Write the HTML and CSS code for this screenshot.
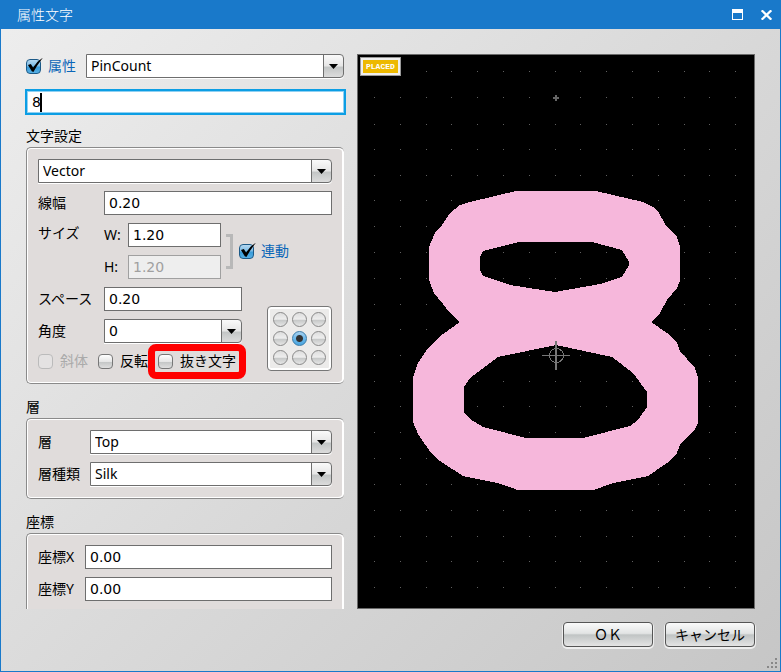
FILE: index.html
```html
<!DOCTYPE html>
<html lang="ja">
<head>
<meta charset="utf-8">
<title>属性文字</title>
<link rel="stylesheet" href="styles.css">
</head>
<body>
<div class="window">
  <header class="titlebar">
    <h1>属性文字</h1>
    <button type="button" class="winbtn" aria-label="最大化"><svg width="11" height="11" viewBox="0 0 11 11" shape-rendering="crispEdges"><path fill="#fff" fill-rule="evenodd" d="M0 0h11v11H0zM1 4v6h9V4z"/></svg></button>
    <button type="button" class="winbtn" aria-label="閉じる"><svg width="11" height="10" viewBox="0 0 11 10"><path stroke="#fff" stroke-width="2.2" d="M.7.3l9.6 9.4M10.3.3L.7 9.7"/></svg></button>
  </header>

  <main class="content">
    <form class="settings">
      <div class="attr-row">
        <label class="check blue"><input type="checkbox" checked>属性</label>
        <span class="select"><select aria-label="属性名"><option>PinCount</option></select></span>
      </div>
      <div class="value-field">
        <input type="text" class="num" value="8" aria-label="属性値">
        <span class="caret"></span>
      </div>

      <section>
        <h2>文字設定</h2>
        <div class="group">
          <span class="select"><select aria-label="フォント"><option>Vector</option></select></span>
          <div class="row">
            <label class="name" for="line">線幅</label>
            <input type="text" class="num" id="line" value="0.20">
          </div>
          <div class="row">
            <span class="name top">サイズ</span>
            <div class="sizes">
              <div class="row"><label class="axis" for="w">W:</label><input type="text" class="num" id="w" value="1.20"></div>
              <div class="row"><label class="axis" for="h">H:</label><input type="text" class="num" id="h" value="1.20" disabled></div>
            </div>
            <span class="bracket"></span>
            <label class="check blue"><input type="checkbox" checked>連動</label>
          </div>
          <div class="lower">
            <div class="lower-fields">
              <div class="row"><label class="name" for="space">スペース</label><input type="text" class="num" id="space" value="0.20"></div>
              <div class="row"><label class="name" for="angle">角度</label><span class="select"><select class="num" id="angle"><option>0</option></select></span></div>
              <div class="checks">
                <label class="check off"><input type="checkbox" disabled>斜体</label>
                <label class="check"><input type="checkbox">反転</label>
                <label class="check marked"><input type="checkbox">抜き文字</label>
              </div>
            </div>
            <div class="pivot" role="radiogroup" aria-label="基準点">
              <input type="radio" name="p" aria-label="左上"><input type="radio" name="p" aria-label="上"><input type="radio" name="p" aria-label="右上">
              <input type="radio" name="p" aria-label="左"><input type="radio" name="p" aria-label="中央" checked><input type="radio" name="p" aria-label="右">
              <input type="radio" name="p" aria-label="左下"><input type="radio" name="p" aria-label="下"><input type="radio" name="p" aria-label="右下">
            </div>
          </div>
        </div>
      </section>

      <section>
        <h2>層</h2>
        <div class="group layer">
          <div class="row"><label class="name" for="layer">層</label><span class="select"><select id="layer"><option>Top</option></select></span></div>
          <div class="row"><label class="name" for="kind">層種類</label><span class="select"><select id="kind"><option>Silk</option></select></span></div>
        </div>
      </section>

      <section>
        <h2>座標</h2>
        <div class="group coord">
          <div class="row"><label class="name" for="cx">座標X</label><input type="text" class="num" id="cx" value="0.00"></div>
          <div class="row"><label class="name" for="cy">座標Y</label><input type="text" class="num" id="cy" value="0.00"></div>
        </div>
      </section>
    </form>

    <div class="preview">
      <svg viewBox="358 55 396 553" preserveAspectRatio="xMidYMid slice" shape-rendering="crispEdges">
        <path fill="none" stroke="#606060" stroke-width="1" stroke-dasharray="1 24.8" d="M374 71.5h380M374 97.5h380M374 124.5h380M374 149.5h380M374 175.5h380M374 200.5h380M374 226.5h380M374 252.5h380M374 278.5h380M374 304.5h380M374 329.5h380M374 355.5h380M374 381.5h380M374 406.5h380M374 432.5h380M374 458.5h380M374 484.5h380M374 510.5h380M374 536.5h380M374 561.5h380M374 587.5h380"/>
        <path fill="#f6b7db" fill-rule="evenodd" d="M516 191H596L643 202 653 207 659 213 665 224 677 237 680 247V281L677 288 667 300 660 313 651 322 667 333 677 343 680 351 695 368 698 377V423L695 429 680 445 676 455 667 463 648 476 613 483 594 490H518L497 483 463 476 440 461 431 453 418 434 413 422V377L418 363 428 348 443 334 460 322 450 313 443 304 434 293 429 280V247L435 233 442 225 450 213 460 205 470 202Z
          M519 242H592L622 250 629 262V265L622 277 600 284 555 292 510 285 483 276 480 270V257L483 251Z
          M556 345L612 357 633 373 647 392V407L638 420 630 426 583 438H526L483 427 470 419 464 412V387L470 378 498 357Z"/>
        <path fill="#777" d="M555 341h2v29h-2zM542 355h28v1h-28z"/>
        <circle cx="556.5" cy="355.5" r="7" fill="none" stroke="#777"/>
        <path fill="#666" d="M555 95h2v6h-2zM553 97h6v2h-6z"/>
      </svg>
      <span class="badge">PLACED</span>
    </div>
  </main>

  <footer class="actions">
    <button type="button" class="btn">ＯＫ</button>
    <button type="button" class="btn">キャンセル</button>
  </footer>
  <svg class="grip" width="10" height="10" viewBox="0 0 10 10" shape-rendering="crispEdges"><path fill="#888" d="M8 0h2v2H8zM4 4h2v2H4zM8 4h2v2H8zM0 8h2v2H0zM4 8h2v2H4zM8 8h2v2H8z"/></svg>
</div>
</body>
</html>
```
FILE: styles.css
```css
* { box-sizing: border-box; }

body {
  margin: 0;
  color: #000;
  font: 14px/20px "Noto Sans", "Noto Sans CJK JP", sans-serif;
}

.window {
  position: relative;
  display: flex;
  flex-direction: column;
  height: 100vh;
  border: 1px solid #1979ca;
  border-top: 0;
  background: linear-gradient(135deg, #eee 0%, #dcdcdc 45%, #c6c6c6 100%);
}

.titlebar {
  display: flex;
  flex: none;
  align-items: center;
  gap: 18px;
  height: 29px;
  padding: 0 8px 0 16px;
  background: #1979ca;
  color: #fff;
}

.titlebar h1 {
  flex: 1;
  margin: 0;
  font-size: 14px;
  font-weight: 300;
}

.winbtn {
  display: flex;
  padding: 0;
  border: 0;
  background: none;
}

.content {
  display: grid;
  flex: 1;
  grid-template-columns: 321px minmax(0, 1fr);
  gap: 11px;
  min-height: 0;
  padding: 25px 25px 0 24px;
}

.settings {
  min-height: 0;
  overflow: hidden;
}

.attr-row {
  display: flex;
  gap: 10px;
  padding: 0 2px 0 1px;
}

.check {
  display: flex;
  flex: none;
  align-items: center;
  gap: 7px;
  white-space: nowrap;
}

.blue { color: #0a66b8; }
.off { color: #aaa; }

input[type="checkbox"] {
  flex: none;
  width: 15px;
  height: 15px;
  margin: 0;
  border: 1px solid #777;
  border-radius: 4px;
  background: linear-gradient(#fff, #e6e6e6 50%, #c4c6c6 55%, #dedede);
  appearance: none;
}

input[type="checkbox"]:disabled { border-color: #bbb; background: #e4e2e2; }

input[type="checkbox"]:checked {
  position: relative;
  border-color: #1c5a88;
  background: linear-gradient(#b5d8f0, #7dbce6 45%, #3a9bd8 55%, #55afe4);
}

input[type="checkbox"]:checked::after {
  position: absolute;
  inset: -2px -3px 0 0;
  background: #000;
  clip-path: polygon(6% 50%, 24% 44%, 38% 67%, 66% 28%, 100% 0, 64% 54%, 40% 96%, 30% 92%);
  content: "";
}

.select {
  position: relative;
  display: flex;
  flex: 1;
  min-width: 0;
}

.select::after {
  position: absolute;
  top: 10px;
  right: 6px;
  width: 9px;
  height: 5px;
  background: #000;
  clip-path: polygon(0 0, 100% 0, 50% 100%);
  content: "";
  pointer-events: none;
}

select,
input[type="text"] {
  width: 100%;
  min-width: 0;
  height: 24px;
  margin: 0;
  padding: 0 4px;
  border: 1px solid #6e6e6e;
  border-radius: 0;
  outline: 0;
  background: #fff;
  color: #000;
  font: inherit;
}

select {
  padding: 0 24px 0 4px;
  border-radius: 0 4px 4px 0;
  background:
    linear-gradient(#6e6e6e, #6e6e6e) right 19px top / 1px 100% no-repeat,
    linear-gradient(#fafafa, #e6e6e6 50%, #c2c5c5 55%, #dcdcdc) right / 19px 100% no-repeat,
    #fff;
  box-shadow: 0 1px 0 #fff;
  appearance: none;
}

select.num,
input.num { font-family: "DejaVu Sans", sans-serif; }

input[type="text"]:disabled {
  border-color: #a0a0a0;
  background: #eee;
  color: #a0a0a0;
}

.value-field {
  position: relative;
  margin-top: 11px;
}

.value-field input[type="text"] {
  height: 26px;
  padding: 0 5px;
  border: 2px solid #0c9ee4;
  box-shadow: inset 0 0 0 1px #8fd0f2;
}

.caret {
  position: absolute;
  top: 4px;
  left: 15px;
  width: 2px;
  height: 19px;
  background: #000;
}

section { padding: 0 2px 0 1px; }

h2 {
  margin: 11px 0 1px;
  font-size: 14px;
  font-weight: 400;
}

section + section h2 { margin-top: 13px; }

.group {
  display: flex;
  flex-direction: column;
  gap: 8px;
  padding: 11px 12px 12px 11px;
  border: 1px solid #8a8a8a;
  border-right: 0;
  border-radius: 5px;
  background: #e0dcdb;
  box-shadow: inset -1px 0 0 1px #fff, inset 0 0 0 1px #fff;
}

.row { display: flex; align-items: center; }

.name {
  flex: none;
  width: 66px;
}

.name.top { align-self: flex-start; }
.layer .name { width: 52px; }
.coord .name { width: 47px; }

.sizes {
  display: flex;
  flex-direction: column;
  gap: 8px;
  width: 117px;
}

.axis {
  flex: none;
  width: 24px;
}

.bracket {
  width: 7px;
  height: 35px;
  margin: 0 6px 0 5px;
  border: 3px solid #b8b8b8;
  border-left: 0;
}

.lower {
  display: flex;
  align-items: flex-end;
  justify-content: space-between;
}

.lower-fields {
  display: flex;
  flex-direction: column;
  gap: 8px;
  width: 204px;
}

.checks { display: flex; gap: 10px; }

.marked { position: relative; }

.marked::after {
  position: absolute;
  inset: -7px -10px -8px -10px;
  border: 7px solid #f00;
  border-radius: 8px;
  content: "";
  pointer-events: none;
}

.pivot {
  display: grid;
  flex: none;
  grid-template-columns: repeat(3, 15px);
  gap: 4px;
  padding: 5px;
  border: 1px solid #777;
  border-radius: 4px;
  background: #ecebea;
  box-shadow: inset 0 0 0 2px #fff;
}

.pivot input {
  width: 15px;
  height: 15px;
  margin: 0;
  border: 1px solid #888;
  border-radius: 50%;
  background: linear-gradient(#ddd, #eee 48%, #c6c8c8 55%, #e6e6e6);
  appearance: none;
}

.pivot input:checked {
  border-color: #3a7ba8;
  background: radial-gradient(circle, #333 0 3px, transparent 4px), linear-gradient(#a8d2f0, #6db8ea 50%, #4ba6e0);
}

.preview {
  position: relative;
  min-height: 0;
  border: 1px solid #6a6a6a;
  background: #000;
}

.preview svg {
  display: block;
  width: 100%;
  height: 100%;
}

.badge {
  position: absolute;
  top: 2px;
  left: 2px;
  padding: 0 5px;
  border: 1px solid #999;
  background: #edb900;
  box-shadow: inset 0 0 0 2px #eee;
  color: #fff;
  font: bold 8px/17px "Liberation Mono", monospace;
}

.actions {
  display: flex;
  flex: none;
  justify-content: flex-end;
  gap: 12px;
  padding: 13px 25px 24px;
}

.btn {
  width: 90px;
  height: 25px;
  padding: 0;
  border: 1px solid #555;
  border-radius: 4px;
  background: linear-gradient(#fafafa, #e2e4e4 45%, #c0c4c4 52%, #e4e4e4);
  box-shadow: 0 1px 0 1px #eee;
  color: #000;
  font: inherit;
}

.grip {
  position: absolute;
  right: 3px;
  bottom: 3px;
}
```
